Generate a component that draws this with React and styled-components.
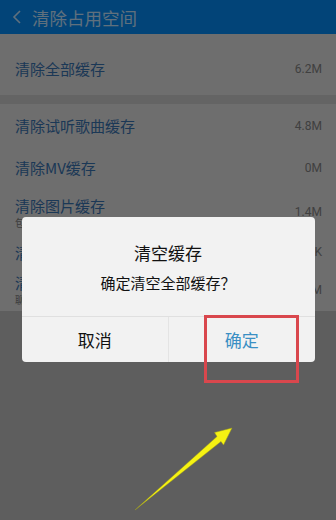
import React from 'react';
import styled, { createGlobalStyle } from 'styled-components';

const GlobalStyle = createGlobalStyle`
  html, body {
    margin: 0;
    padding: 0;
    height: 100%;
    background: #bcbcbc;
    font-family: "Noto Sans CJK SC", "Noto Sans", sans-serif;
  }
  #root {
    min-height: 100%;
  }
`;

const Page = styled.div`
  width: 336px;
  height: 520px;
  position: relative;
  overflow: hidden;
  background: #bcbcbc;
`;

const Header = styled.div`
  height: 34px;
  background: #0488f0;
  display: flex;
  align-items: center;
  padding-left: 11px;
  gap: 9px;
  color: rgba(255, 255, 255, 0.75);
  font-size: 17.5px;
`;

const Section = styled.div`
  background: #dcdcdc;
  display: flex;
  flex-direction: column;
`;

const Gap = styled.div`
  height: 9px;
  background: #c8c8c8;
`;

const Row = styled.div`
  height: ${p => p.$h}px;
  display: flex;
  align-items: center;
  justify-content: space-between;
  padding: ${p => p.$top || 0}px 14px 0 15px;
  box-sizing: border-box;
`;

const Texts = styled.div`
  display: flex;
  flex-direction: column;
`;

const Title = styled.div`
  font-size: 15px;
  line-height: 21px;
  color: #3770ac;
`;

const Sub = styled.div`
  font-size: 10px;
  line-height: 14px;
  color: #7a7a7a;
`;

const Value = styled.div`
  font-size: 12px;
  color: #808080;
  font-family: "Roboto", "Noto Sans", sans-serif;
`;

const Overlay = styled.div`
  position: absolute;
  inset: 0;
  background: rgba(0, 0, 0, 0.5);
  display: flex;
  flex-direction: column;
  align-items: center;
  padding-top: 217px;
  box-sizing: border-box;
`;

const Dialog = styled.div`
  width: 293px;
  background: #f2f2f2;
  border-radius: 4px;
  display: flex;
  flex-direction: column;
`;

const Body = styled.div`
  padding: 26px 0 23px;
  display: flex;
  flex-direction: column;
  align-items: center;
  gap: 10px;
  border-bottom: 1px solid #e0e0e0;
`;

const DialogTitle = styled.div`
  font-size: 17px;
  line-height: 20px;
  color: #111;
`;

const Message = styled.div`
  font-size: 15px;
  line-height: 20px;
  color: #111;
`;

const Buttons = styled.div`
  display: grid;
  grid-template-columns: 1fr 1fr;
  height: 45px;
`;

const Button = styled.div`
  display: flex;
  align-items: center;
  justify-content: center;
  font-size: 17px;
  color: ${p => (p.$primary ? '#3a8fc4' : '#111')};
  border-left: ${p => (p.$primary ? '1px solid #e4e4e4' : 'none')};
`;

const Highlight = styled.div`
  position: absolute;
  left: 204px;
  top: 315px;
  width: 95px;
  height: 68px;
  border: 3px solid #d9474d;
  box-sizing: border-box;
`;

const Arrow = styled.svg`
  position: absolute;
  left: 0;
  top: 0;
  pointer-events: none;
`;

const rows = [
  { title: '清除试听歌曲缓存', value: '4.8M', h: 43 },
  { title: '清除MV缓存', value: '0M', h: 41 },
  { title: '清除图片缓存', sub: '包括头像、专辑封面、歌手写真等图片', value: '1.4M', h: 48 },
  { title: '清除歌词缓存', value: '86K', h: 32 },
  { title: '清除聊天缓存', sub: '聊天中的图片、语音等文件', value: '0.3M', h: 43 },
];

export default function App() {
  return (
    <Page>
      <GlobalStyle />
      <Header>
        <svg width="12" height="16" viewBox="0 0 12 16">
          <path d="M9 2 L3 8 L9 14" fill="none" stroke="rgba(255,255,255,0.75)" strokeWidth="1.6" />
        </svg>
        清除占用空间
      </Header>
      <Section>
        <Row $h={61} $top={8}>
          <Title>清除全部缓存</Title>
          <Value>6.2M</Value>
        </Row>
      </Section>
      <Gap />
      <Section>
        {rows.map(r => (
          <Row key={r.title} $h={r.h}>
            <Texts>
              <Title>{r.title}</Title>
              {r.sub && <Sub>{r.sub}</Sub>}
            </Texts>
            <Value>{r.value}</Value>
          </Row>
        ))}
      </Section>

      <Overlay>
        <Dialog>
          <Body>
            <DialogTitle>清空缓存</DialogTitle>
            <Message>确定清空全部缓存？</Message>
          </Body>
          <Buttons>
            <Button>取消</Button>
            <Button $primary>确定</Button>
          </Buttons>
        </Dialog>
      </Overlay>

      <Highlight />
      <Arrow width="336" height="520" viewBox="0 0 336 520">
        <polygon
          points="135,510 217,436.5 214.5,432.5 232,428 223.5,445 221,441.5"
          fill="#f6f212"
          stroke="#9a9a20"
          strokeWidth="0.5"
        />
      </Arrow>
    </Page>
  );
}
